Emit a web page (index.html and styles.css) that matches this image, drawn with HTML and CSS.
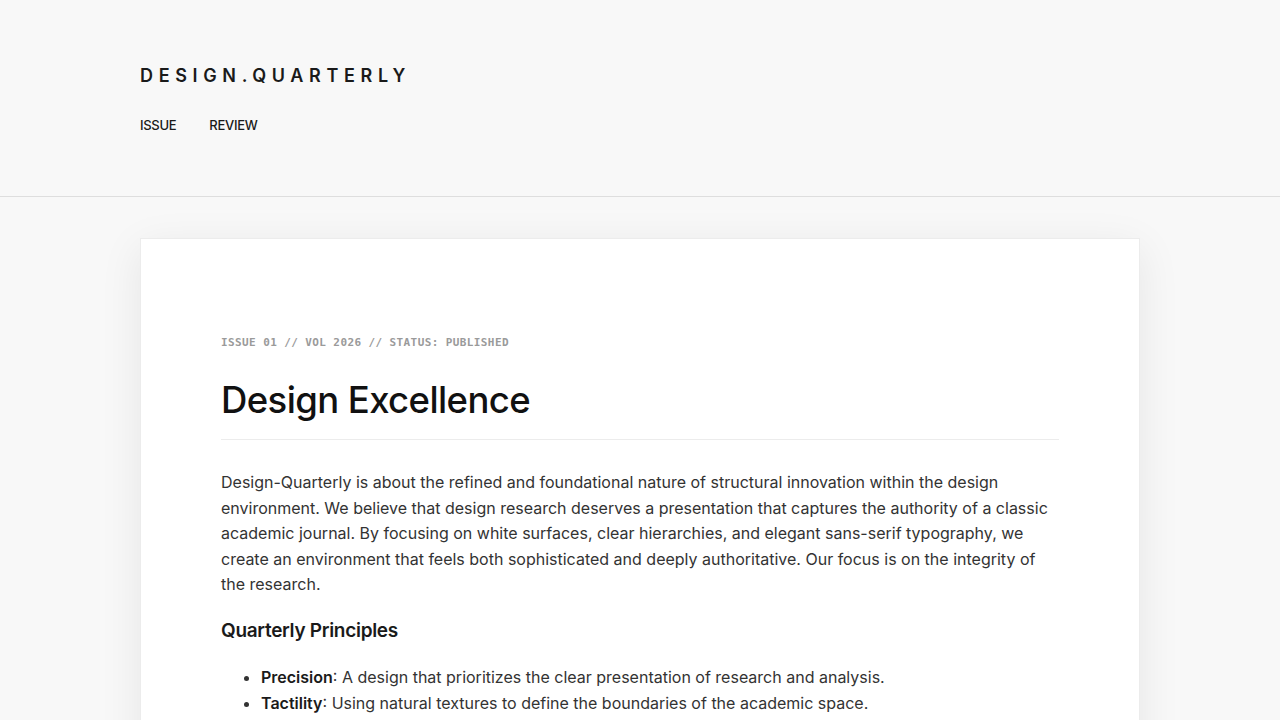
FILE: index.html
```html
<!DOCTYPE html>
<html lang="en">
<head>
<meta charset="utf-8">
<title>Design Quarterly</title>
<link rel="stylesheet" href="styles.css">
</head>
<body>
<header class="site-header">
  <div class="logo">DESIGN.QUARTERLY</div>
  <nav class="nav">
    <a href="#">ISSUE</a>
    <a href="#">REVIEW</a>
  </nav>
</header>
<main class="main">
  <article class="card">
    <div class="meta">ISSUE 01 // VOL 2026 // STATUS: PUBLISHED</div>
    <h1 class="title">Design Excellence</h1>
    <p class="lead">Design-Quarterly is about the refined and foundational nature of structural innovation within the design environment. We believe that design research deserves a presentation that captures the authority of a classic academic journal. By focusing on white surfaces, clear hierarchies, and elegant sans-serif typography, we create an environment that feels both sophisticated and deeply authoritative. Our focus is on the integrity of the research.</p>
    <h2 class="subtitle">Quarterly Principles</h2>
    <ul class="list">
      <li><strong>Precision</strong>: A design that prioritizes the clear presentation of research and analysis.</li>
      <li><strong>Tactility</strong>: Using natural textures to define the boundaries of the academic space.</li>
    </ul>
  </article>
</main>
</body>
</html>
```

FILE: styles.css
```css
* { box-sizing: border-box; }
html, body { margin: 0; padding: 0; }
body {
  background: #f8f8f8;
  font-family: Inter, "Liberation Sans", sans-serif;
  color: #1a1a1a;
}
.site-header {
  padding: 65px 140px 63px;
  border-bottom: 1px solid #dedede;
}
.logo {
  font-size: 18px;
  line-height: 22px;
  font-weight: 600;
  letter-spacing: 5.65px;
  color: #1a1a1a;
}
.nav {
  display: flex;
  gap: 33px;
  margin-top: 30px;
}
.nav a {
  font-size: 13px;
  line-height: 16px;
  font-weight: 500;
  color: #1a1a1a;
  text-decoration: none;
  letter-spacing: -0.3px;
}
.main {
  padding-top: 41px;
}
.card {
  width: 1000px;
  margin: 0 auto;
  background: #fff;
  border: 1px solid #ececec;
  box-shadow: 0 10px 40px rgba(0,0,0,0.08);
  padding: 96px 80px 80px;
  min-height: 600px;
}
.meta {
  font-family: "DejaVu Sans Mono", "Liberation Mono", monospace;
  font-weight: 700;
  font-size: 11px;
  line-height: 16px;
  letter-spacing: 0.4px;
  color: #9a9a9a;
}
.title {
  margin: 26px 0 0;
  font-size: 36.5px;
  line-height: 46px;
  font-weight: 500;
  letter-spacing: -0.6px;
  color: #111;
  padding-bottom: 16px;
  border-bottom: 1px solid #ececec;
}
.lead {
  margin: 30px 0 0;
  font-size: 16px;
  line-height: 25.6px;
  color: #333;
  letter-spacing: 0;
}
.subtitle {
  margin: 19px 0 0;
  font-size: 19px;
  line-height: 28px;
  font-weight: 600;
  color: #1a1a1a;
  letter-spacing: -0.3px;
}
.list {
  margin: 19px 0 0;
  padding-left: 40px;
  font-size: 16px;
  line-height: 26px;
  color: #333;
  letter-spacing: 0;
}
.list strong { font-weight: 600; color: #1a1a1a; }
```
